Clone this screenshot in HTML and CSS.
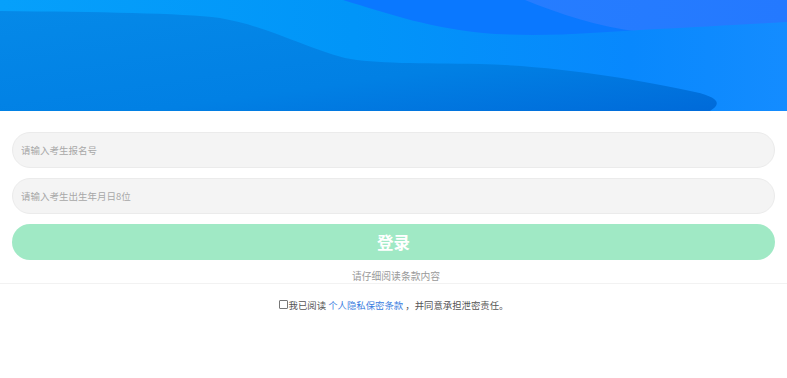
FILE: index.html
```html
<!DOCTYPE html>
<html lang="zh-CN">

<head>
    <meta charset="UTF-8">
    <meta name="viewport" content="width=device-width, initial-scale=1.0">
    <title>考生登录</title>

    <link rel="stylesheet" href="styles.css">
</head>

<body>
    <div class="main">

        <!-- 顶部波浪背景 -->
        <div class="banner">
            <svg viewBox="0 0 787 111" preserveAspectRatio="none" width="100%" height="100%">
                <defs>
                    <linearGradient id="topRight" x1="0" y1="0" x2="1" y2="0">
                        <stop offset="0" stop-color="#2a84ff" />
                        <stop offset="1" stop-color="#2479ff" />
                    </linearGradient>
                    <linearGradient id="band" x1="0" y1="0" x2="1" y2="0">
                        <stop offset="0" stop-color="#06a0fb" />
                        <stop offset="0.45" stop-color="#0195f8" />
                        <stop offset="0.8" stop-color="#0888fd" />
                        <stop offset="1" stop-color="#148cff" />
                    </linearGradient>
                    <linearGradient id="bottom" x1="0" y1="0" x2="1" y2="1">
                        <stop offset="0" stop-color="#0589e8" />
                        <stop offset="0.6" stop-color="#0180e4" />
                        <stop offset="1" stop-color="#006ad9" />
                    </linearGradient>
                </defs>
                <rect x="0" y="0" width="787" height="111" fill="url(#topRight)" />
                <path d="M320,0 L525,0 C560,14 595,26 640,32 L640,60 L320,60 Z" fill="#0a78ff" />
                <path d="M0,0 L343,0 C390,14 430,29 495,34 C555,37 600,32 640,30 C700,27 750,24 787,22 L787,111 L0,111 Z" fill="url(#band)" />
                <path d="M0,11 C100,12 180,13 220,18 C270,27 300,46 345,58 C375,64 420,63 480,64 C560,66 640,80 695,92 C722,98 720,105 710,111 L0,111 Z" fill="url(#bottom)" />
            </svg>
        </div>

        <div class="form">
            <input class="field" type="text" placeholder="请输入考生报名号">
            <input class="field" type="text" placeholder="请输入考生出生年月日8位">
            <div class="btn">登录</div>
        </div>

        <p class="tip">请仔细阅读条款内容</p>

        <div class="agree">
            <input class="check" type="checkbox">
            <span>我已阅读 <a href="#">个人隐私保密条款</a> ，并同意承担泄密责任。</span>
        </div>
    </div>
</body>

</html>
```

FILE: styles.css
```css
* {
    box-sizing: border-box;
}

body {
    margin: 0;
    background-color: #fff;
    font-family: "Microsoft YaHei", "Noto Sans CJK SC", sans-serif;
}

.main {
    width: 100%;
}

.banner {
    height: 111px;
    line-height: 0;
}

.banner svg {
    display: block;
}

.form {
    padding: 21px 12px 0;
    display: flex;
    flex-direction: column;
    gap: 10px;
}

.field {
    width: 100%;
    height: 36px;
    border: 1px solid #ebebeb;
    border-radius: 18px;
    background-color: #f4f4f4;
    padding: 0 8px;
    font-family: inherit;
    font-size: 9.5px;
    color: #555;
    outline: none;
}

.field::placeholder {
    color: #a8a8a8;
}

.btn {
    height: 36px;
    border-radius: 18px;
    background-color: #a0e9c5;
    color: #fff;
    text-align: center;
    line-height: 36px;
    font-size: 16.5px;
    font-weight: 700;
    cursor: pointer;
}

.tip {
    margin: 0;
    height: 24px;
    line-height: 33px;
    padding-left: 5px;
    text-align: center;
    font-size: 9.8px;
    color: #9a9a9a;
    border-bottom: 1px solid #f2f2f2;
}

.agree {
    display: flex;
    justify-content: center;
    align-items: center;
    height: 44px;
    padding-bottom: 3px;
    font-size: 9.4px;
    color: #555;
}

.check {
    -webkit-appearance: none;
    appearance: none;
    width: 9px;
    height: 9px;
    margin: 0 1px 0 0;
    border: 1px solid #777;
    border-radius: 1px;
    background: #fff;
}

.agree a {
    color: #3a7de0;
    text-decoration: none;
}
```
